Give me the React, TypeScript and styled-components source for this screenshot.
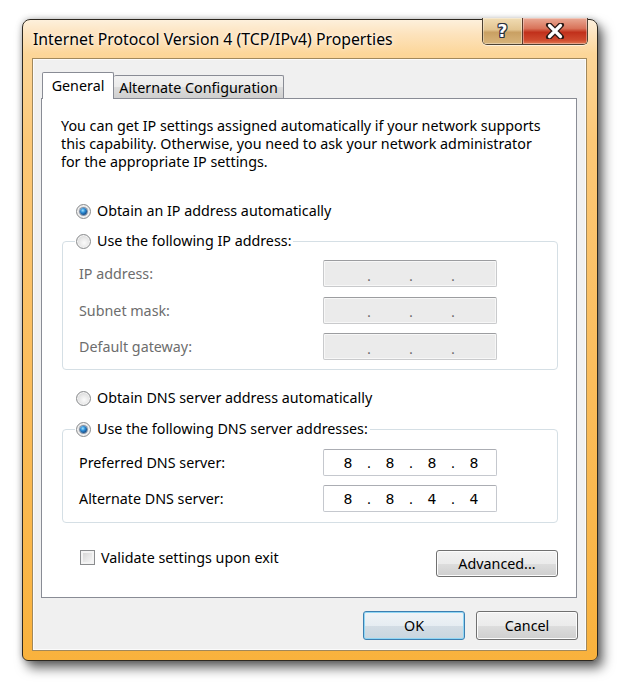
import React from 'react'
import styled, { createGlobalStyle } from 'styled-components'

const GlobalStyle = createGlobalStyle`
  html, body {
    margin: 0;
    padding: 0;
    background: #ffffff;
  }
  body {
    font-family: "Noto Sans", "Open Sans", sans-serif;
    color: #000;
  }
  * {
    box-sizing: border-box;
  }
`

const TEXT = '14.3px'

const Page = styled.div`
  width: 620px;
  height: 686px;
  padding: 19px 0 0 22px;
  overflow: hidden;
`

const Window = styled.div`
  width: 576px;
  height: 642px;
  display: flex;
  flex-direction: column;
  padding: 0 10px 9px 9px;
  border: 1px solid #2d2820;
  border-radius: 8px 8px 6px 6px;
  background: linear-gradient(
    180deg,
    #fdf0dc 0px,
    #fde3bd 14px,
    #fcd699 34px,
    #fcc877 120px,
    #fbbd5c 360px,
    #f9b23d 100%
  );
  box-shadow: 5px 7px 12px rgba(0, 0, 0, 0.6), 0 0 6px rgba(0, 0, 0, 0.25);
`

const TitleBar = styled.div`
  height: 38px;
  margin: 0 -10px 0 -9px;
  padding: 0 9px 0 10px;
  display: flex;
`

const Title = styled.div`
  flex: 1;
  align-self: center;
  font-size: 15.8px;
  line-height: 20px;
  color: #000;
  text-shadow: 0 0 8px rgba(255, 255, 255, 0.9), 0 0 3px rgba(255, 255, 255, 0.9);
  white-space: nowrap;
`

const CaptionButtons = styled.div`
  display: flex;
  align-self: flex-start;
  margin-top: -2px;
  height: 27px;
  border: 1px solid #4d4234;
  border-top: none;
  border-radius: 0 0 5px 5px;
  overflow: hidden;
  box-shadow: 0 1px 0 rgba(255, 255, 255, 0.6);
`

const CaptionButton = styled.div<{ $kind: 'help' | 'close' }>`
  width: ${p => (p.$kind === 'help' ? 39 : 65)}px;
  display: flex;
  align-items: center;
  justify-content: center;
  border-left: ${p => (p.$kind === 'close' ? '1px solid #5a3a2a' : 'none')};
  box-shadow: inset 0 0 0 1px rgba(255, 255, 255, 0.35);
  background: ${p =>
    p.$kind === 'help'
      ? 'linear-gradient(180deg, #f0dcb4 0%, #e2c490 45%, #c9a063 55%, #d8b47a 100%)'
      : 'linear-gradient(180deg, #e9a994 0%, #d9735a 40%, #c1301b 55%, #cf4a2e 85%, #e27a52 100%)'};
`

const HelpGlyph = styled.span`
  font-family: "DejaVu Sans", sans-serif;
  font-weight: bold;
  font-size: 17px;
  line-height: 17px;
  color: #ffffff;
  text-shadow: -1px 0 #2a3040, 1px 0 #2a3040, 0 -1px #2a3040, 0 1px #2a3040,
    1px 1px #2a3040, -1px -1px #2a3040, 1px -1px #2a3040, -1px 1px #2a3040;
`

const Client = styled.div`
  flex: 1;
  display: flex;
  flex-direction: column;
  padding: 13px 9px 10px 8px;
  background: #f0f0f0;
  border: 1px solid #a1885c;
  box-shadow: inset 0 0 0 1px #fbfbfb;
`

const TabStrip = styled.div`
  height: 26px;
  display: flex;
  align-items: flex-end;
  padding-left: 1px;
`

const Tab = styled.div<{ $active?: boolean }>`
  position: relative;
  z-index: ${p => (p.$active ? 2 : 1)};
  height: ${p => (p.$active ? 27 : 23)}px;
  margin-bottom: ${p => (p.$active ? -1 : 0)}px;
  width: ${p => (p.$active ? 72 : 170)}px;
  display: flex;
  align-items: center;
  justify-content: center;
  padding-bottom: ${p => (p.$active ? 2 : 0)}px;
  font-size: ${TEXT};
  white-space: nowrap;
  border: 1px solid #898c95;
  border-bottom: none;
  border-left: ${p => (p.$active ? '1px solid #898c95' : 'none')};
  border-radius: 2px 2px 0 0;
  background: ${p =>
    p.$active ? '#ffffff' : 'linear-gradient(180deg, #f2f2f2 0%, #ebebeb 50%, #dddddd 51%, #cfcfcf 100%)'};
`

const Panel = styled.div`
  height: 500px;
  display: flex;
  flex-direction: column;
  padding: 18px 18px 0 19px;
  background: #ffffff;
  border: 1px solid #898c95;
`

const Description = styled.p`
  margin: 0;
  font-size: ${TEXT};
  line-height: 18px;
  white-space: nowrap;
`

const RadioRow = styled.label<{ $gap: number }>`
  display: flex;
  align-items: center;
  gap: 6px;
  height: 18px;
  margin-top: ${p => p.$gap}px;
  padding-left: 15px;
  font-size: ${TEXT};
  line-height: 18px;
`

const Radio = styled.span<{ $checked?: boolean }>`
  position: relative;
  width: 15px;
  height: 15px;
  flex: none;
  border-radius: 50%;
  border: 1px solid #8a8c8e;
  background: radial-gradient(circle at 55% 60%, #fbfbfb 0%, #e8e8e8 45%, #c9c9c9 100%);
  box-shadow: inset 0 0 0 1px #f4f4f4;

  &::after {
    content: '';
    display: ${p => (p.$checked ? 'block' : 'none')};
    position: absolute;
    left: 3px;
    top: 3px;
    width: 7px;
    height: 7px;
    border-radius: 50%;
    background: radial-gradient(circle at 40% 35%, #9fe3ff 0%, #2f8fd8 35%, #0f3f78 80%, #122a4a 100%);
    box-shadow: 0 0 0 1px rgba(30, 60, 100, 0.5);
  }
`

const Group = styled.fieldset<{ $pad: string; $top: number }>`
  margin: ${p => p.$top}px 0 0 1px;
  min-width: 0;
  padding: ${p => p.$pad};
  border: 1px solid #d5dfe5;
  border-radius: 4px;
`

const Legend = styled.legend`
  margin-left: -4px;
  padding: 0 2px 0 1px;
`

const LegendRadio = styled.span`
  display: flex;
  align-items: center;
  gap: 6px;
  height: 18px;
  font-size: ${TEXT};
  line-height: 18px;
`

const FieldGrid = styled.div<{ $gap: number }>`
  display: grid;
  grid-template-columns: 1fr 174px;
  grid-auto-rows: 27px;
  row-gap: ${p => p.$gap}px;
  align-items: center;
`

const FieldLabel = styled.span<{ $disabled?: boolean }>`
  font-size: ${TEXT};
  white-space: nowrap;
  color: ${p => (p.$disabled ? '#6d6d6d' : '#000000')};
`

const IpField = styled.div<{ $disabled?: boolean }>`
  height: 27px;
  display: flex;
  align-items: center;
  padding-left: 7px;
  border: 1px solid ${p => (p.$disabled ? '#c9cacc' : '#c5c8ce')};
  border-top-color: ${p => (p.$disabled ? '#9c9da0' : '#abadb3')};
  border-radius: 2px;
  background: ${p => (p.$disabled ? '#ebebeb' : '#ffffff')};
  box-shadow: ${p => (p.$disabled ? 'inset 0 0 0 1px #f7f7f7' : 'none')};
  font-family: "DejaVu Sans", sans-serif;
  font-size: 14px;
`

const Octet = styled.span`
  width: 34px;
  text-align: center;
  color: #000;
`

const Dot = styled.span<{ $disabled?: boolean }>`
  width: 8px;
  text-align: center;
  color: ${p => (p.$disabled ? '#6a6a6a' : '#000')};
  position: relative;
  top: ${p => (p.$disabled ? 2 : 0)}px;
`

const BottomRow = styled.div`
  display: flex;
  justify-content: space-between;
  align-items: flex-start;
  margin-top: 25px;
`

const CheckRow = styled.label`
  display: flex;
  align-items: center;
  gap: 6px;
  height: 18px;
  margin-left: 19px;
  font-size: ${TEXT};
`

const Checkbox = styled.span`
  width: 15px;
  height: 15px;
  flex: none;
  border: 1px solid #8a8c8e;
  background: linear-gradient(135deg, #d0d0d0 0%, #e6e6e6 50%, #fbfbfb 100%);
  box-shadow: inset 0 0 0 2px #f3f3f3;
`

const Button = styled.button<{ $w: number; $h: number; $default?: boolean }>`
  width: ${p => p.$w}px;
  height: ${p => p.$h}px;
  padding: 0;
  font-family: "Noto Sans", "Open Sans", sans-serif;
  font-size: ${TEXT};
  color: #000;
  border: 1px solid ${p => (p.$default ? '#3c7fb1' : '#707070')};
  border-radius: 3px;
  background: ${p =>
    p.$default
      ? 'linear-gradient(180deg, #f0f4f7 0%, #e6edf2 50%, #d3dde5 51%, #c9d6df 100%)'
      : 'linear-gradient(180deg, #f2f2f2 0%, #ebebeb 50%, #dddddd 51%, #cfcfcf 100%)'};
  box-shadow: inset 0 0 0 1px ${p => (p.$default ? '#90d6f4' : '#fcfcfc')};
`

const AdvancedButton = styled(Button)`
  margin-top: 2px;
`

const Footer = styled.div`
  display: flex;
  justify-content: flex-end;
  gap: 11px;
  margin-top: 13px;
  margin-right: -1px;
`

const CloseIcon = () => (
  <svg width="20" height="16" viewBox="0 0 20 16">
    <path d="M4 2 L16 14 M16 2 L4 14" stroke="#2b1a16" strokeWidth="6" strokeLinecap="round" />
    <path d="M4.5 2.5 L15.5 13.5 M15.5 2.5 L4.5 13.5" stroke="#ffffff" strokeWidth="3.2" strokeLinecap="round" />
  </svg>
)

const IpBox: React.FC<{ octets?: string[] }> = ({ octets }) => {
  const disabled = !octets
  const parts = octets || ['', '', '', '']
  return (
    <IpField $disabled={disabled}>
      {parts.map((o, i) => (
        <React.Fragment key={i}>
          <Octet>{o}</Octet>
          {i < 3 && <Dot $disabled={disabled}>.</Dot>}
        </React.Fragment>
      ))}
    </IpField>
  )
}

export default function App() {
  return (
    <Page>
      <GlobalStyle />
      <Window>
        <TitleBar>
          <Title>Internet Protocol Version 4 (TCP/IPv4) Properties</Title>
          <CaptionButtons>
            <CaptionButton $kind="help">
              <HelpGlyph>?</HelpGlyph>
            </CaptionButton>
            <CaptionButton $kind="close">
              <CloseIcon />
            </CaptionButton>
          </CaptionButtons>
        </TitleBar>

        <Client>
          <TabStrip>
            <Tab $active>General</Tab>
            <Tab>Alternate Configuration</Tab>
          </TabStrip>

          <Panel>
            <Description>
              You can get IP settings assigned automatically if your network supports
              <br />
              this capability. Otherwise, you need to ask your network administrator
              <br />
              for the appropriate IP settings.
            </Description>

            <RadioRow $gap={31}>
              <Radio $checked />
              Obtain an IP address automatically
            </RadioRow>

            <Group $pad="10px 60px 9px 16px" $top={12}>
              <Legend>
                <LegendRadio>
                  <Radio />
                  Use the following IP address:
                </LegendRadio>
              </Legend>
              <FieldGrid $gap={9.5}>
                <FieldLabel $disabled>IP address:</FieldLabel>
                <IpBox />
                <FieldLabel $disabled>Subnet mask:</FieldLabel>
                <IpBox />
                <FieldLabel $disabled>Default gateway:</FieldLabel>
                <IpBox />
              </FieldGrid>
            </Group>

            <RadioRow $gap={19}>
              <Radio />
              Obtain DNS server address automatically
            </RadioRow>

            <Group $pad="11px 60px 10px 16px" $top={13}>
              <Legend>
                <LegendRadio>
                  <Radio $checked />
                  Use the following DNS server addresses:
                </LegendRadio>
              </Legend>
              <FieldGrid $gap={9}>
                <FieldLabel>Preferred DNS server:</FieldLabel>
                <IpBox octets={['8', '8', '8', '8']} />
                <FieldLabel>Alternate DNS server:</FieldLabel>
                <IpBox octets={['8', '8', '4', '4']} />
              </FieldGrid>
            </Group>

            <BottomRow>
              <CheckRow>
                <Checkbox />
                Validate settings upon exit
              </CheckRow>
              <AdvancedButton $w={122} $h={27}>Advanced...</AdvancedButton>
            </BottomRow>
          </Panel>

          <Footer>
            <Button $w={102} $h={29} $default>OK</Button>
            <Button $w={102} $h={29}>Cancel</Button>
          </Footer>
        </Client>
      </Window>
    </Page>
  )
}
